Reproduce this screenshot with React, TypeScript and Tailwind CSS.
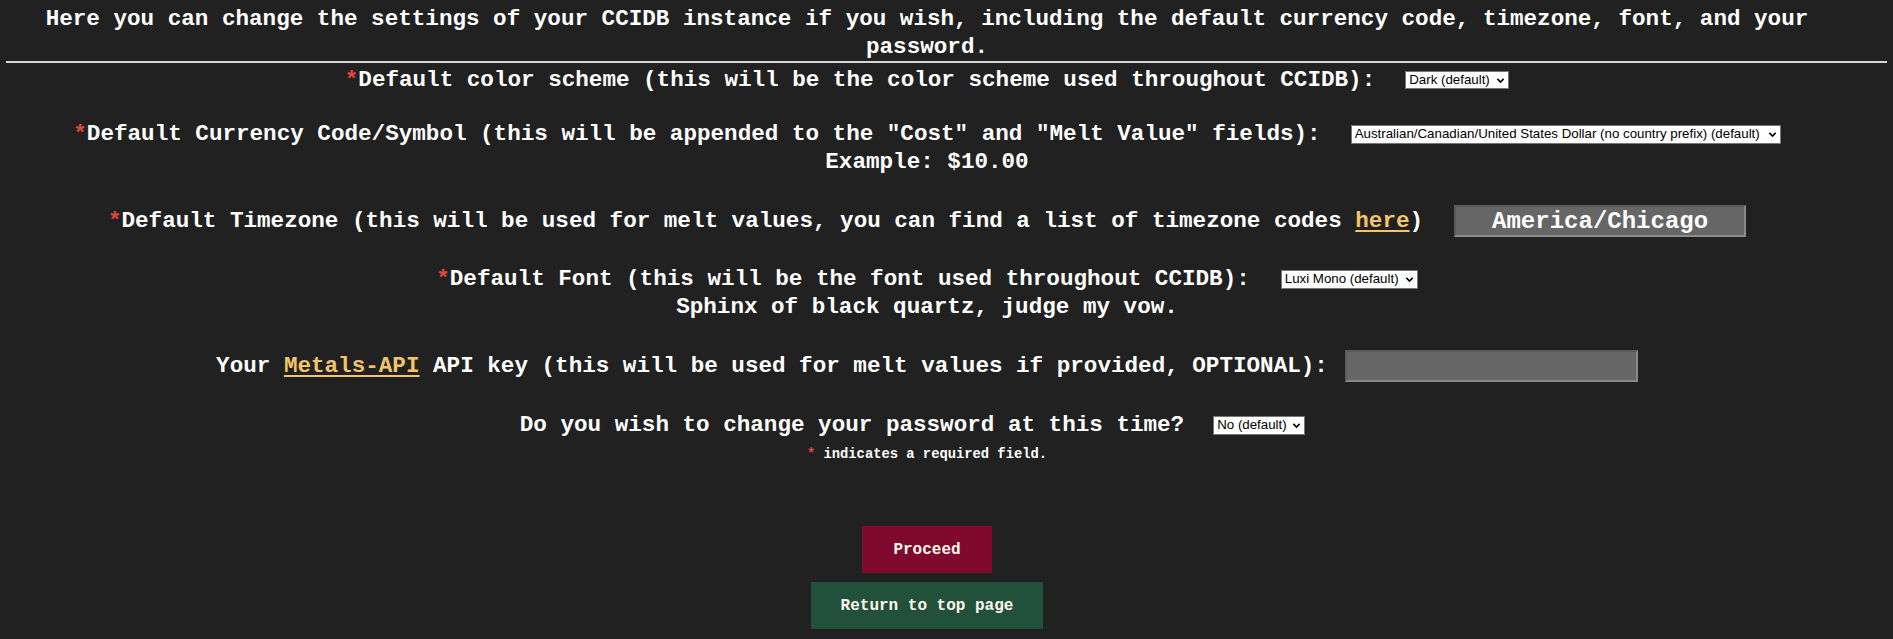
import React, { useState } from 'react';

const mono = "font-['Liberation_Mono','DejaVu_Sans_Mono',monospace]";

const Req = () => <span className="text-[#e2453c]">*</span>;

type DropdownProps = {
  value: string;
  options: string[];
  className: string;
  onChange: (v: string) => void;
};

// plain white select like the browser default, chevron drawn on the right
const Dropdown: React.FC<DropdownProps> = ({ value, options, className, onChange }) => (
  <div className={`inline-flex items-center h-[18px] bg-white border border-[#767676] shrink-0 ${className}`}>
    <select
      value={value}
      onChange={(e) => onChange(e.target.value)}
      className="flex-1 min-w-0 h-full appearance-none bg-transparent pl-[3px] text-black text-[13.3px] leading-[16px] font-['Liberation_Sans',Arial,sans-serif] font-normal outline-none"
    >
      {options.map((o) => (
        <option key={o} value={o}>{o}</option>
      ))}
    </select>
    <svg className="w-[9px] h-[9px] mr-[3px] shrink-0" viewBox="0 0 10 10" fill="none">
      <path d="M1.5 3.2 5 6.7 8.5 3.2" stroke="#000" strokeWidth="1.8" />
    </svg>
  </div>
);

const App: React.FC = () => {
  const [scheme, setScheme] = useState('Dark (default)');
  const [currency, setCurrency] = useState('Australian/Canadian/United States Dollar (no country prefix) (default)');
  const [font, setFont] = useState('Luxi Mono (default)');
  const [changePw, setChangePw] = useState('No (default)');
  const [timezone, setTimezone] = useState('America/Chicago');
  const [apiKey, setApiKey] = useState('');

  return (
    <div className={`min-h-[639px] w-full bg-[#212121] text-white font-bold ${mono}`}>
      {/* Intro */}
      <div className="w-[1854px] pt-[5px] text-center text-[22.6px] leading-[28px]">
        Here you can change the settings of your CCIDB instance if you wish, including the default currency code, timezone, font, and your password.
      </div>
      <div className="mx-[6px] h-[2px] bg-[#d6d6d6]"></div>

      <form className="w-[1854px] flex flex-col items-center text-[22.6px] leading-[28px]" onSubmit={(e) => e.preventDefault()}>
        {/* Color scheme */}
        <div className="mt-[3px] h-[28px] flex items-center gap-[30px]">
          <span><Req />Default color scheme (this will be the color scheme used throughout CCIDB):</span>
          <Dropdown value={scheme} onChange={setScheme} options={['Dark (default)', 'Light']} className="w-[104px]" />
        </div>

        {/* Currency */}
        <div className="mt-[26px] h-[28px] flex items-center gap-[30px]">
          <span><Req />Default Currency Code/Symbol (this will be appended to the "Cost" and "Melt Value" fields):</span>
          <Dropdown
            value={currency}
            onChange={setCurrency}
            options={['Australian/Canadian/United States Dollar (no country prefix) (default)', 'Euro']}
            className="w-[430px] h-[19px]"
          />
        </div>
        <div className="h-[28px]">Example: $10.00</div>

        {/* Timezone */}
        <div className="mt-[29px] h-[32px] flex items-center gap-[31px]">
          <span>
            <Req />Default Timezone (this will be used for melt values, you can find a list of timezone codes{' '}
            <a href="#" className="text-[#f2c56c] underline underline-offset-[3px]">here</a>)
          </span>
          <input
            value={timezone}
            onChange={(e) => setTimezone(e.target.value)}
            className="w-[292px] h-[32px] bg-[#666666] border-2 border-t-[#5a5a5a] border-l-[#5a5a5a] border-b-[#8a8a8a] border-r-[#8a8a8a] text-center text-white text-[24px] font-bold outline-none"
          />
        </div>

        {/* Font */}
        <div className="mt-[28px] h-[28px] flex items-center gap-[31px]">
          <span><Req />Default Font (this will be the font used throughout CCIDB):</span>
          <Dropdown value={font} onChange={setFont} options={['Luxi Mono (default)', 'Liberation Sans']} className="w-[137px] h-[19px]" />
        </div>
        <div className="h-[28px]">Sphinx of black quartz, judge my vow.</div>

        {/* API key */}
        <div className="mt-[29px] h-[32px] flex items-center gap-[17px]">
          <span>
            Your <a href="#" className="text-[#f2c56c] underline underline-offset-[3px]">Metals-API</a> API key (this will be used for melt values if provided, OPTIONAL):
          </span>
          <input
            value={apiKey}
            onChange={(e) => setApiKey(e.target.value)}
            className="w-[293px] h-[32px] bg-[#666666] border-2 border-t-[#5a5a5a] border-l-[#5a5a5a] border-b-[#8a8a8a] border-r-[#8a8a8a] text-white text-[24px] outline-none"
          />
        </div>

        {/* Password */}
        <div className="mt-[29px] h-[28px] flex items-center gap-[29px] pr-[29px]">
          <span>Do you wish to change your password at this time?</span>
          <Dropdown value={changePw} onChange={setChangePw} options={['No (default)', 'Yes']} className="w-[92px] h-[19px]" />
        </div>

        <div className="mt-[6px] text-[13.8px] leading-[20px]"><Req /> indicates a required field.</div>

        <button type="submit" className="mt-[61px] h-[47px] px-[31px] bg-[#7f0a2d] text-[#fff8ec] text-[16px] font-bold">
          Proceed
        </button>
        <button type="button" className="mt-[9px] h-[47px] px-[30px] bg-[#21513b] text-[#fff8ec] text-[16px] font-bold">
          Return to top page
        </button>
      </form>
    </div>
  );
};

export default App;
